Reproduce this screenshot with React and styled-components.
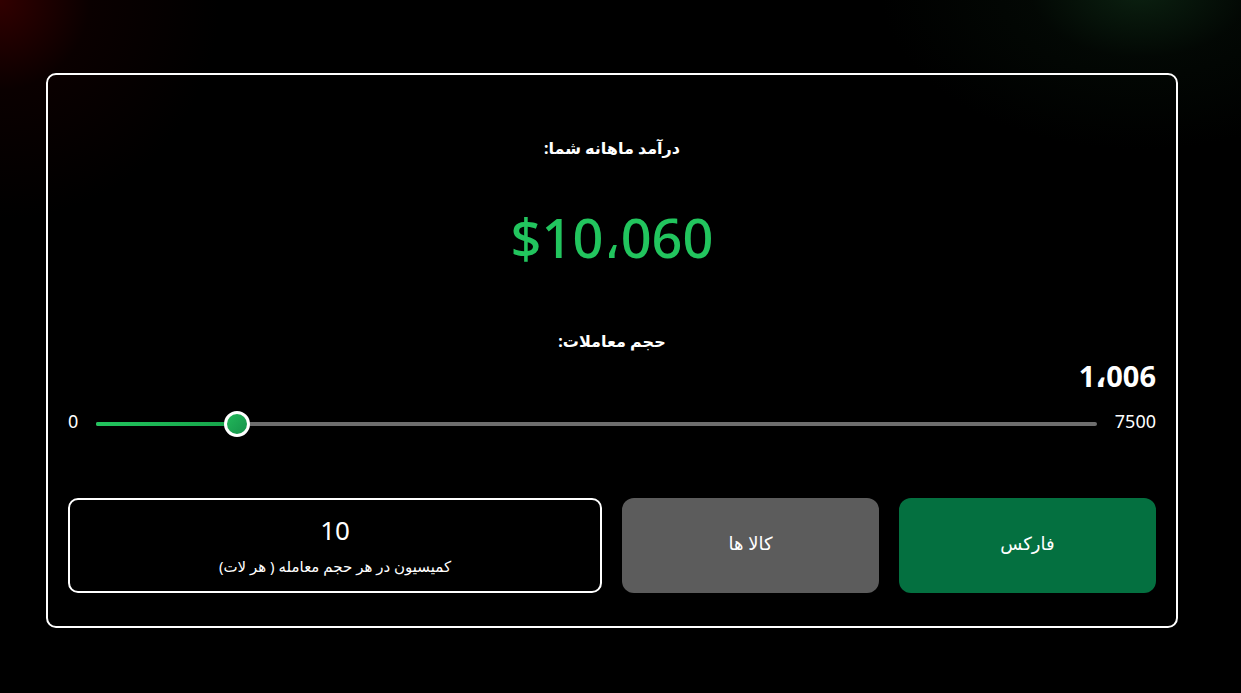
import React from "react";
import styled, { createGlobalStyle } from "styled-components";

const Global = createGlobalStyle`
  html, body { margin: 0; padding: 0; background: #000; }
  body {
    min-height: 693px;
    font-family: "Noto Sans", "DejaVu Sans", sans-serif;
    color: #fff;
    background:
      radial-gradient(circle at 0px 0px, rgba(90, 0, 0, 0.55) 0px, rgba(40,0,0,0.25) 90px, rgba(0,0,0,0) 220px),
      radial-gradient(ellipse 260px 160px at 1140px -10px, rgba(20, 60, 30, 0.55) 0px, rgba(10,30,15,0.25) 110px, rgba(0,0,0,0) 260px),
      #000;
  }
`;

const Page = styled.div`
  padding: 73px 0 0 46px;
`;

const Card = styled.section`
  box-sizing: border-box;
  width: 1132px;
  height: 555px;
  border: 2px solid #fff;
  border-radius: 10px;
  padding: 61px 20px 33px;
  direction: rtl;
  display: flex;
  flex-direction: column;
`;

const Label = styled.div`
  text-align: center;
  font-weight: 700;
  font-size: 16px;
  line-height: 24px;
  margin-top: ${(p) => p.$mt || 0}px;
`;

const Amount = styled.div`
  text-align: center;
  direction: ltr;
  color: #22c55e;
  font-weight: 500;
  font-size: 54px;
  line-height: 72px;
  margin-top: 41px;
`;

const Volume = styled.div`
  text-align: right;
  font-weight: 700;
  font-size: 29px;
  line-height: 36px;
  margin-top: 5px;
  direction: ltr;
`;

const SliderRow = styled.div`
  direction: ltr;
  display: flex;
  align-items: center;
  gap: 18px;
  margin-top: 16px;
  height: 28px;
`;

const Edge = styled.span`
  font-size: 18px;
  line-height: 20px;
  margin-top: -6px;
`;

const Track = styled.div`
  position: relative;
  flex: 1;
  height: 4px;
  border-radius: 2px;
  background: #6e6e6e;
`;

const Fill = styled.div`
  height: 100%;
  border-radius: 2px;
  background: linear-gradient(90deg, #22c55e, #16a34a);
`;

const Thumb = styled.div`
  position: absolute;
  top: 50%;
  width: 26px;
  height: 26px;
  box-sizing: border-box;
  border-radius: 50%;
  border: 3px solid #fff;
  background: linear-gradient(135deg, #22b85a, #15924a);
  transform: translate(-50%, -50%);
`;

const Options = styled.div`
  display: grid;
  grid-template-columns: repeat(4, 1fr);
  gap: 20px;
  margin-top: auto;
  height: 95px;
`;

const OptionButton = styled.button`
  border: none;
  border-radius: 12px;
  background: ${(p) => (p.$active ? "#047040" : "#5c5c5c")};
  color: #fff;
  font-family: inherit;
  font-size: 18px;
  line-height: 24px;
  cursor: pointer;
  padding: 0 0 6px;
`;

const Commission = styled.div`
  grid-column: span 2;
  box-sizing: border-box;
  border: 2px solid #fff;
  border-radius: 10px;
  display: flex;
  flex-direction: column;
  align-items: center;
  justify-content: center;
  gap: 10px;
  padding-bottom: 2px;
`;

const CommissionValue = styled.div`
  font-size: 26px;
  line-height: 32px;
  direction: ltr;
`;

const CommissionLabel = styled.div`
  font-size: 15px;
  line-height: 20px;
`;

export default function App() {
  const value = 1006;
  const max = 7500;
  const pct = (value / max) * 100;
  return (
    <>
      <Global />
      <Page>
        <Card>
          <Label>درآمد ماهانه شما:</Label>
          <Amount>$10،060</Amount>
          <Label $mt={56}>حجم معاملات:</Label>
          <Volume>1،006</Volume>
          <SliderRow>
            <Edge>0</Edge>
            <Track>
              <Fill style={{ width: `${pct}%` }} />
              <Thumb style={{ left: `calc(${pct}% + 7px)` }} />
            </Track>
            <Edge>7500</Edge>
          </SliderRow>
          <Options>
            <OptionButton $active>فارکس</OptionButton>
            <OptionButton>کالا ها</OptionButton>
            <Commission>
              <CommissionValue>10</CommissionValue>
              <CommissionLabel>کمیسیون در هر حجم معامله ( هر لات)</CommissionLabel>
            </Commission>
          </Options>
        </Card>
      </Page>
    </>
  );
}
